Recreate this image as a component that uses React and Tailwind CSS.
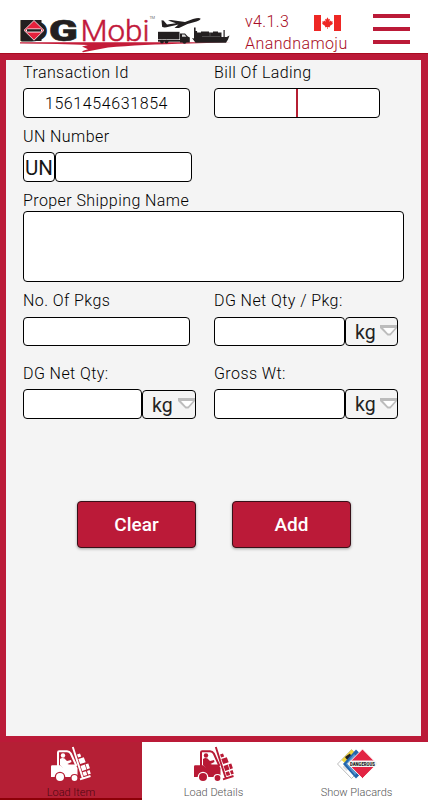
import React from "react";

const label = "relative top-px h-5 text-[16px] font-light leading-5 tracking-[0.42px] whitespace-nowrap text-black";
const box = "block rounded-[4px] border border-black bg-white";

function Logo() {
  return (
    <svg width="216" height="42" viewBox="18 12 216 42" className="block">
      <text x="19.5" y="40.6" fontFamily="Roboto, sans-serif" fontWeight="900" fontSize="28.5" textLength="28" lengthAdjust="spacingAndGlyphs" fill="#231f20" stroke="#231f20" strokeWidth="1">D</text>
      <rect x="20.5" y="20" width="21" height="21" fill="#231f20" />
      <path d="M34 20.5 44 30.3 34 40.2 24 30.3Z" fill="#e5213c" stroke="#fff" strokeWidth="0.8" />
      <path d="M25.500 30.400l2-2h13l2 2-2 2h-13Z" fill="#fff" />
      <path d="M27 30.4h14" stroke="#231f20" strokeWidth="2.4" />
      <text transform="translate(49 40.8) scale(1.44 1)" fontFamily="Roboto, sans-serif" fontWeight="900" fontSize="29.3" fill="#231f20" stroke="#231f20" strokeWidth="0.6">G</text>
      <text x="80.5" y="41" fontFamily="Roboto, sans-serif" fontWeight="300" fontSize="29.5" textLength="69" lengthAdjust="spacingAndGlyphs" fill="#c2183a" stroke="#c2183a" strokeWidth="0.5">Mobi</text>
      <text x="149.500" y="18.5" fontFamily="Roboto, sans-serif" fontWeight="400" fontSize="4" textLength="5.500" fill="#777">TM</text>
      <path d="M20 42.2H231L190 43.4Q140 44.500 108 47.400L83 52.2Q80 51.500 88 49.300L82 46.600 88 45Q60 43.8 20 43.5Z" fill="#c41c39" />
      <g fill="#231f20">
        <path d="M161.500 20.300l2 .2 3.500 4 9-1.200-8-2.800 3-.4 14 2 8-3.100q6-1.600 7.500-.5.300 1.700-4 3l-9 2.500-8.500 4h-4.500l4-3.500-12 2.800q-5 .5-4.500-1.500Z" />
        <rect x="158" y="31.800" width="21.500" height="7.600" />
        <path d="M180 33.5h5l2.8 3 2 1v5h-9.8Z" />
        <path d="M158 40h24v1.7h-24Z" />
        <circle cx="162" cy="41.6" r="1.9" />
        <circle cx="166.500" cy="41.6" r="1.900" />
        <circle cx="184.5" cy="41.7" r="2" />
        <path d="M192 38l2 .4V27.500h1.600v3.500h1.500v1.500H201v-1h8v1h4v-1h5v1h3.500v4.500h2v-7h1.200v7h2l2.800-1.500-1.500 4-2 3.200H195.500Z" />
      </g>
      <path d="M182 34.5h2.6l1.8 2.3H182Z" fill="#ddd" />
      <path d="M202 36.500h18M210 33v3" stroke="#777" strokeWidth="0.5" />
    </svg>
  );
}

function Flag() {
  return (
    <svg width="27" height="16" viewBox="0 0 27 16" className="block">
      <rect width="27" height="16" fill="#fff" />
      <rect width="7" height="16" fill="#ee2724" />
      <rect x="20" width="7" height="16" fill="#ee2724" />
      <path d="M13.5 2.2l1.2 2.2 1.2-.6-.5 3 1.5-1.2.5 1 1.5-.2-.6 1.7.7.6-3.2 2.4.2 1.1-2.2-.3v2h-.6v-2l-2.2.3.2-1.1L8 8.700l.7-.6L8.100 6.400l1.500.2.500-1 1.500 1.200-.5-3 1.200.6Z" fill="#ee2724" />
    </svg>
  );
}

function Forklift({ body, detail }) {
  return (
    <svg width="42" height="36" viewBox="0 0 42 36" className="block">
      <path d="M8 20V6.500Q8 5.300 9.200 5.300H17Q19.500 5.300 20.800 7.500L26.500 20" fill="none" stroke={body} strokeWidth="2" />
      <path d="M1 20.500Q1 19.300 2.200 19.300H10L13 22H18V18.500H25.500L27.500 22V31H1Z" fill={body} />
      <circle cx="13" cy="9.500" r="2.200" fill={body} />
      <path d="M10 13Q12 11.500 14.500 12.500L17 15 21 14 21.500 16 17.500 18 18.500 18.500V22H12.500L10 19Z" fill={body} />
      <path d="M22.800 1L33 33M30 33.300L40.500 30" fill="none" stroke={body} strokeWidth="1.900" />
      <path d="M27 8.500l3-1 1.200 3-3 1ZM28.300 13l5.500-1.800 1.900 5.100-5.500 1.800ZM30.500 20l4.300-1.400 1.700 5-4.300 1.400ZM35.500 18.300l2.800-.9 1.600 4.900-2.800.9ZM32.500 26.300l3.500-1.100 1.200 3.700-3.500 1.100ZM37 24.900l2.600-.8 1.200 3.600-2.600.8Z" fill={body} />
      <circle cx="10" cy="31" r="5.300" fill={detail} />
      <circle cx="10" cy="31" r="4" fill={body} />
      <circle cx="24.500" cy="32" r="4.100" fill={detail} />
      <circle cx="24.500" cy="32" r="2.900" fill={body} />
    </svg>
  );
}

function Placards() {
  return (
    <svg width="42" height="32" viewBox="0 0 42 32" className="block">
      <path d="M15.500 1.500 30 16 15.500 30.500 1.500 16Z" fill="#fff" stroke="#aaa" strokeWidth=".8" />
      <path d="M15.500 1.500 23 8 11 17 5.500 12Z" fill="#f0d43c" />
      <path d="M9 9l2-1.500 3-2 1 2 3-1-2 3-3 1-1 2-2-2Z" fill="#222" />
      <path d="M9.500 16l-3 3 4 4 3-3Z" fill="#ddd" />
      <path d="M20 1.500 34.500 16 20 30.500 7 16Z" fill="#2466ac" />
      <path d="M18 6l3 3-7 7 8 8-3 3-9-11Z" fill="#5894cd" />
      <path d="M26.500 1 41 15.800 26.500 30.500 12 15.800Z" fill="#e22443" stroke="#fff" strokeWidth=".9" />
      <path d="M14.500 12.500h24l3 3.300-3 3.300h-24l-3-3.300Z" fill="#f5f5f5" />
      <text x="14" y="17.500" fontFamily="Roboto, sans-serif" fontWeight="900" fontSize="4.500" textLength="25" lengthAdjust="spacingAndGlyphs" fill="#222">DANGEROUS</text>
    </svg>
  );
}

function Unit({ className = "" }) {
  return (
    <div className={"flex items-center justify-between rounded-[4px] border border-black pl-[9px] " + className}>
      <span className="relative top-px text-[19.5px] font-normal leading-none text-[#222]">kg</span>
      <svg width="17" height="14" viewBox="0 0 17 14" className="-mt-[1px] block">
        <path d="M0 1H17V4L10.500 11.500H7.500L0 4Z" fill="#bcbcbc" />
        <path d="M3 4H15L10 9.500H8Z" fill="#fff" />
      </svg>
    </div>
  );
}

function Tab({ children, text, className }) {
  return (
    <div className={"flex flex-col items-center " + className}>
      <div className="h-9 shrink-0">{children}</div>
      <span className="mt-[4px] text-[11px] font-light leading-[14px] whitespace-nowrap">{text}</span>
    </div>
  );
}

export default function App() {
  return (
    <div className="flex h-[800px] w-[428px] flex-col overflow-hidden bg-[#bb1a38] font-['Roboto',sans-serif]">
      <header className="flex h-[54px] shrink-0 border-b border-[#a90b20] bg-white">
        <div className="ml-[18px] w-[227px] pt-3"><Logo /></div>
        <div className="w-[128px] text-[16px] font-light text-[#a80c24]">
          <div className="flex h-[33px] items-end">
            <span className="h-[21px] w-[69px] leading-5 tracking-[0.4px]">v4.1.3</span>
            <div className="mb-[2px]"><Flag /></div>
          </div>
          <div className="leading-[21px] tracking-[0.42px]">Anandnamoju</div>
        </div>
        <div className="flex flex-col gap-[9px] pt-[14px]">
          <i className="h-[4px] w-[37px] bg-[#bb1a38]" />
          <i className="h-[4px] w-[37px] bg-[#bb1a38]" />
          <i className="h-[4px] w-[37px] bg-[#bb1a38]" />
        </div>
      </header>

      <main className="mx-[6px] mt-[6px] mr-[7px] h-[676px] shrink-0 bg-[#f4f4f4] pl-[17px] pt-[2px]">
        <div className="flex h-16">
          <div className="w-[191px]">
            <div className={label}>Transaction Id</div>
            <div className={box + " mt-[6px] h-[30px] w-[167px] text-center text-[16px] font-light leading-[30px] tracking-[0.6px] text-black"}>1561454631854</div>
          </div>
          <div>
            <div className={label}>Bill Of Lading</div>
            <div className={box + " mt-[6px] flex h-[30px] w-[166px] justify-center"}><i className="h-full w-[2px] bg-[#b51f32]" /></div>
          </div>
        </div>
        <div className="h-16">
          <div className={label}>UN Number</div>
          <div className="mt-[6px] flex">
            <div className={box + " h-[30px] w-[32px] text-center text-[20.5px] font-normal leading-[30px] text-[#181818]"}>UN</div>
            <div className={box + " h-[30px] w-[137px]"} />
          </div>
        </div>
        <div className="h-[100px]">
          <div className={label}>Proper Shipping Name</div>
          <div className={box + " mt-[1px] h-[71px] w-[381px]"} />
        </div>
        <div className="flex h-[73px]">
          <div className="w-[191px]">
            <div className={label}>No. Of Pkgs</div>
            <div className={box + " mt-[7px] h-[29px] w-[167px]"} />
          </div>
          <div>
            <div className={label}>DG Net Qty / Pkg:</div>
            <div className="mt-[7px] flex"><div className={box + " h-[29px] w-[131px]"} /><Unit className="h-[29px] w-[53px]" /></div>
          </div>
        </div>
        <div className="flex h-[138px]">
          <div className="w-[191px]">
            <div className={label}>DG Net Qty:</div>
            <div className="mt-[6px] flex"><div className={box + " h-[30px] w-[119px]"} /><Unit className="mt-[1px] h-[29px] w-[54px]" /></div>
          </div>
          <div>
            <div className={label}>Gross Wt:</div>
            <div className="mt-[6px] flex"><div className={box + " h-[30px] w-[131px]"} /><Unit className="h-[30px] w-[53px]" /></div>
          </div>
        </div>
        <div className="ml-[54px] flex gap-[36px]">
          {["Clear", "Add"].map((text) => (
            <button key={text} className="h-[47px] w-[119px] rounded-[4px] border border-[#381018] bg-[#bb1a38] pt-[2px] text-[19px] font-medium text-white shadow-[0_1px_3px_rgba(0,0,0,0.35)]">{text}</button>
          ))}
        </div>
      </main>

      <nav className="mt-[6px] flex h-[58px] shrink-0">
        <Tab text="Load Item" className="w-[142px] bg-[linear-gradient(to_top,#8c0008_2px,#b51f35_2px)] pt-[4px] text-[#4c0812]"><Forklift body="#fff" detail="#b51f35" /></Tab>
        <Tab text="Load Details" className="w-[143px] bg-white pt-[4px] text-[#555]"><Forklift body="#b81a35" detail="#fff" /></Tab>
        <Tab text="Show Placards" className="w-[143px] bg-white pt-[4px] text-[#555]"><div className="pt-[2px]"><Placards /></div></Tab>
      </nav>
    </div>
  );
}
